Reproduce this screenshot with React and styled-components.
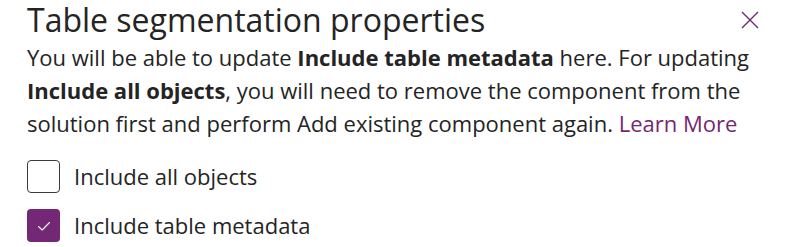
import styled, { createGlobalStyle } from "styled-components";

const GlobalStyle = createGlobalStyle`
  body {
    margin: 0;
    background: #ffffff;
    font-family: "Open Sans", "Noto Sans", sans-serif;
    color: #242424;
  }
`;

const Panel = styled.div`
  width: 800px;
  height: 247px;
  box-sizing: border-box;
  padding: 2px 40px 0 27px;
  overflow: hidden;
`;

const Header = styled.div`
  display: flex;
  justify-content: space-between;
  align-items: flex-start;
`;

const Title = styled.h1`
  margin: 0;
  font-size: 32px;
  font-weight: 400;
  line-height: 36px;
  color: #242424;
`;

const CloseButton = styled.button`
  border: none;
  background: none;
  padding: 0;
  margin-top: 8px;
  width: 20px;
  height: 20px;
  cursor: pointer;
  color: #742774;
`;

const Description = styled.p`
  margin: 3px 0 0;
  font-size: 22px;
  line-height: 33px;
  color: #242424;

  b {
    font-weight: 700;
  }
`;

const Link = styled.a`
  color: #742774;
  text-decoration: none;
`;

const Options = styled.div`
  display: flex;
  flex-direction: column;
  gap: 16px;
  margin-top: 20px;
`;

const Option = styled.label`
  display: flex;
  align-items: center;
  gap: 14px;
  font-size: 22px;
  line-height: 33px;
  color: #242424;
`;

const Box = styled.span`
  box-sizing: border-box;
  width: 33px;
  height: 33px;
  border-radius: 4px;
  border: ${p => (p.checked ? "none" : "1.5px solid #3b3b3b")};
  background: ${p => (p.checked ? "#742774" : "#ffffff")};
  display: flex;
  align-items: center;
  justify-content: center;
`;

const Checkbox = ({ checked, label }) => (
  <Option>
    <Box checked={checked}>
      {checked && (
        <svg width="16" height="16" viewBox="0 0 16 16" fill="none">
          <path d="M2.5 8.5 L6.2 12 L13.5 4.5" stroke="#ffffff" strokeWidth="1.1" strokeLinecap="round" strokeLinejoin="round" />
        </svg>
      )}
    </Box>
    {label}
  </Option>
);

export default function App() {
  return (
    <>
      <GlobalStyle />
      <Panel>
        <Header>
          <Title>Table segmentation properties</Title>
          <CloseButton aria-label="Close">
            <svg width="20" height="20" viewBox="0 0 20 20">
              <path d="M2 2 L18 18 M18 2 L2 18" stroke="currentColor" strokeWidth="1.4" />
            </svg>
          </CloseButton>
        </Header>
        <Description>
          You will be able to update <b>Include table metadata</b> here. For updating{" "}
          <b>Include all objects</b>, you will need to remove the component from the
          solution first and perform Add existing component again. <Link href="#">Learn More</Link>
        </Description>
        <Options>
          <Checkbox label="Include all objects" />
          <Checkbox checked label="Include table metadata" />
        </Options>
      </Panel>
    </>
  );
}
